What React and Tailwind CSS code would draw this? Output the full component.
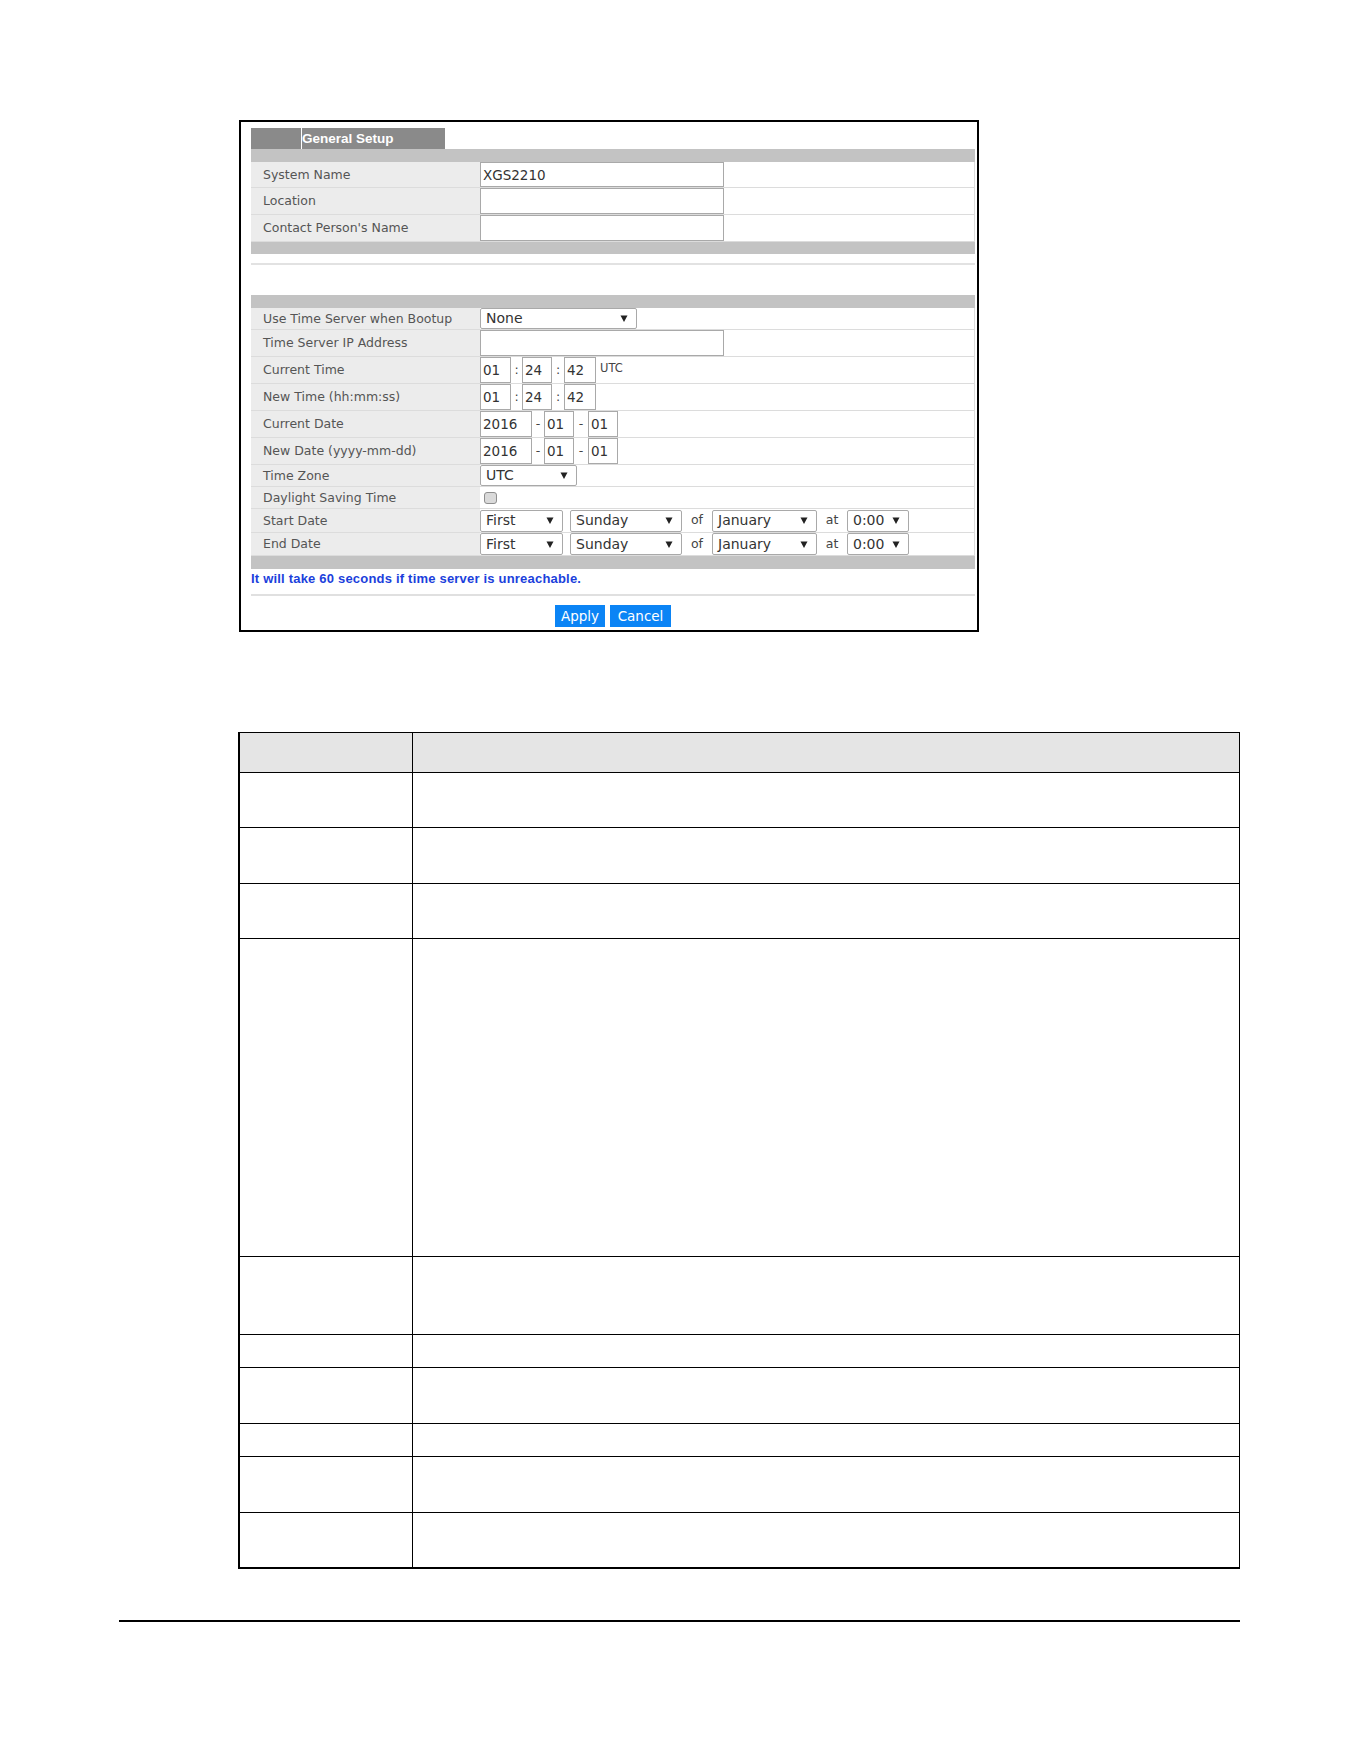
const ui = "font-['DejaVu_Sans',sans-serif]";

function Arrow() {
  return (
    <svg width="8" height="9" viewBox="0 0 8 9" className="shrink-0">
      <path d="M0.5 1.5h7L4 8z" fill="#222" />
    </svg>
  );
}

function Select({ value, width }) {
  return (
    <div
      className={`flex h-full items-center justify-between rounded-[2px] border border-[#a9a9a9] bg-white pl-[5px] pr-[8px] text-[14px] text-[#333] ${width}`}
    >
      <span>{value}</span>
      <Arrow />
    </div>
  );
}

function Box({ value = "", width }) {
  return (
    <input
      readOnly
      defaultValue={value}
      className={`h-full border border-[#a9a9a9] bg-white pl-[2px] text-[13.5px] text-[#333] outline-none ${width}`}
    />
  );
}

function Sep({ children, width }) {
  return <span className={`text-center text-[#444] ${width}`}>{children}</span>;
}

function TimeFields({ utc }) {
  return (
    <div className="flex h-full items-center">
      <Box value="01" width="w-[31px]" />
      <Sep width="w-[11px]">:</Sep>
      <Box value="24" width="w-[30px]" />
      <Sep width="w-[12px]">:</Sep>
      <Box value="42" width="w-[32px]" />
      {utc && <span className="ml-[4px] mb-[2px] text-[11.5px] text-[#444]">UTC</span>}
    </div>
  );
}

function DateFields() {
  return (
    <div className="flex h-full items-center">
      <Box value="2016" width="w-[52px]" />
      <Sep width="w-[12px]">-</Sep>
      <Box value="01" width="w-[30px]" />
      <Sep width="w-[14px]">-</Sep>
      <Box value="01" width="w-[30px]" />
    </div>
  );
}

function DstFields() {
  return (
    <div className="flex h-[22px] items-center">
      <Select value="First" width="w-[83px]" />
      <div className="w-[7px]" />
      <Select value="Sunday" width="w-[112px]" />
      <Sep width="w-[30px]">of</Sep>
      <Select value="January" width="w-[105px]" />
      <Sep width="w-[30px]">at</Sep>
      <Select value="0:00" width="w-[62px]" />
    </div>
  );
}

function Row({ label, h, children }) {
  return (
    <div className={`flex border-b border-r border-[#dcdcdc] ${h}`}>
      <div className="flex w-[229px] shrink-0 items-center bg-[#ececec] pl-[12px] pt-px text-[#555]">
        {label}
      </div>
      <div className="flex flex-1 items-center">{children}</div>
    </div>
  );
}

const GreyBar = ({ h }) => <div className={`bg-[#c3c3c3] ${h}`} />;

const docRows = [
  "h-[55px]",
  "h-[56px]",
  "h-[55px]",
  "h-[318px]",
  "h-[78px]",
  "h-[33px]",
  "h-[56px]",
  "h-[33px]",
  "h-[56px]",
];

export default function App() {
  return (
    <div className="h-[1761px] w-[1361px] overflow-hidden bg-white">
      {/* General Setup panel */}
      <div
        className={`ml-[239px] mt-[120px] w-[740px] border-2 border-black pl-[10px] pr-[2px] pt-[6px] pb-[3px] text-[12.5px] ${ui}`}
      >
        <div className="flex h-[21px] w-[194px] bg-[#8a8a8a]">
          <div className="w-[51px] border-r border-white" />
          <span className="font-['Liberation_Sans',sans-serif] text-[13.5px] font-bold leading-[21px] text-white">
            General Setup
          </span>
        </div>

        <GreyBar h="h-[13px]" />
        <Row label="System Name" h="h-[26px]">
          <Box value="XGS2210" width="w-[244px]" />
        </Row>
        <Row label="Location" h="h-[27px]">
          <Box width="w-[244px]" />
        </Row>
        <Row label="Contact Person's Name" h="h-[27px]">
          <Box width="w-[244px]" />
        </Row>
        <GreyBar h="h-[12px]" />

        <div className="mt-[9px] h-[2px] bg-[#e2e2e2]" />
        <div className="h-[30px]" />

        <GreyBar h="h-[13px]" />
        <Row label="Use Time Server when Bootup" h="h-[22px]">
          <Select value="None" width="w-[157px]" />
        </Row>
        <Row label="Time Server IP Address" h="h-[27px]">
          <Box width="w-[244px]" />
        </Row>
        <Row label="Current Time" h="h-[27px]">
          <TimeFields utc />
        </Row>
        <Row label="New Time (hh:mm:ss)" h="h-[27px]">
          <TimeFields />
        </Row>
        <Row label="Current Date" h="h-[27px]">
          <DateFields />
        </Row>
        <Row label="New Date (yyyy-mm-dd)" h="h-[27px]">
          <DateFields />
        </Row>
        <Row label="Time Zone" h="h-[22px]">
          <Select value="UTC" width="w-[97px]" />
        </Row>
        <Row label="Daylight Saving Time" h="h-[22px]">
          <div className="ml-[4px] h-[12px] w-[13px] rounded-[3px] border border-[#8f8f8f] bg-[#dadada]" />
        </Row>
        <Row label="Start Date" h="h-[24px]">
          <DstFields />
        </Row>
        <Row label="End Date" h="h-[23px]">
          <DstFields />
        </Row>
        <GreyBar h="h-[13px]" />

        <div className="flex h-[19px] items-center font-['Liberation_Sans',sans-serif] text-[13px] font-bold tracking-[0.2px] text-[#1b3fdc]">
          It will take 60 seconds if time server is unreachable.
        </div>
        <div className="mt-[6px] h-[2px] bg-[#e0e0e0]" />

        <div className="mt-[9px] flex justify-center gap-[5px] text-[13.5px] text-white">
          <button className="h-[22px] w-[50px] bg-[#0b84f5]">Apply</button>
          <button className="h-[22px] w-[61px] bg-[#0b84f5]">Cancel</button>
        </div>
      </div>

      {/* field description table */}
      <div className="ml-[238px] mt-[100px] w-[1002px] border-l-2 border-r border-t border-black">
        <div className="flex h-[40px] border-b border-black bg-[#e5e5e5]">
          <div className="w-[173px] border-r border-black" />
          <div className="flex-1" />
        </div>
        {docRows.map((h, i) => (
          <div key={i} className={`flex border-b border-black ${h}`}>
            <div className="w-[173px] border-r border-black" />
            <div className="flex-1" />
          </div>
        ))}
        <div className="flex h-[56px] border-b-2 border-black">
          <div className="w-[173px] border-r border-black" />
          <div className="flex-1" />
        </div>
      </div>

      {/* page footer rules */}
      <div className="ml-[119px] mt-[51px] h-[2px] w-[1121px] bg-black" />
      <div className="mt-[139px] h-px w-[1196px] bg-black" />
    </div>
  );
}
